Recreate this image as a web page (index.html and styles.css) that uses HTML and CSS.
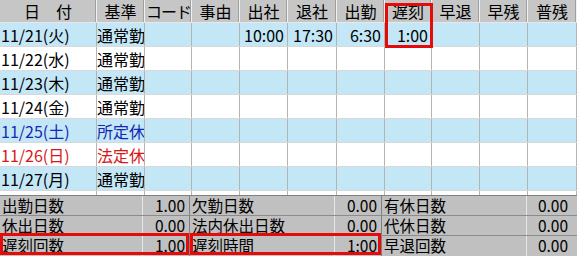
FILE: index.html
```html
<!DOCTYPE html>
<html lang="ja">
<head>
<meta charset="utf-8">
<link rel="stylesheet" href="styles.css">
</head>
<body>
<div class="sheet">
  <div class="grid">
    <div class="row head">
      <div class="c">日　付</div><div class="c">基準</div><div class="c code">コード</div><div class="c">事由</div><div class="c">出社</div><div class="c">退社</div><div class="c">出勤</div><div class="c">遅刻</div><div class="c">早退</div><div class="c">早残</div><div class="c">普残</div>
    </div>
    <div class="row blue">
      <div class="c date">11/21(火)</div><div class="c kind">通常勤</div><div class="c"></div><div class="c"></div><div class="c num">10:00</div><div class="c num">17:30</div><div class="c num">6:30</div><div class="c num">1:00</div><div class="c"></div><div class="c"></div><div class="c"></div>
    </div>
    <div class="row white">
      <div class="c date">11/22(水)</div><div class="c kind">通常勤</div><div class="c"></div><div class="c"></div><div class="c"></div><div class="c"></div><div class="c"></div><div class="c"></div><div class="c"></div><div class="c"></div><div class="c"></div>
    </div>
    <div class="row blue">
      <div class="c date">11/23(木)</div><div class="c kind">通常勤</div><div class="c"></div><div class="c"></div><div class="c"></div><div class="c"></div><div class="c"></div><div class="c"></div><div class="c"></div><div class="c"></div><div class="c"></div>
    </div>
    <div class="row white">
      <div class="c date">11/24(金)</div><div class="c kind">通常勤</div><div class="c"></div><div class="c"></div><div class="c"></div><div class="c"></div><div class="c"></div><div class="c"></div><div class="c"></div><div class="c"></div><div class="c"></div>
    </div>
    <div class="row blue sat">
      <div class="c date">11/25(土)</div><div class="c kind">所定休</div><div class="c"></div><div class="c"></div><div class="c"></div><div class="c"></div><div class="c"></div><div class="c"></div><div class="c"></div><div class="c"></div><div class="c"></div>
    </div>
    <div class="row white sun">
      <div class="c date">11/26(日)</div><div class="c kind">法定休</div><div class="c"></div><div class="c"></div><div class="c"></div><div class="c"></div><div class="c"></div><div class="c"></div><div class="c"></div><div class="c"></div><div class="c"></div>
    </div>
    <div class="row blue">
      <div class="c date">11/27(月)</div><div class="c kind">通常勤</div><div class="c"></div><div class="c"></div><div class="c"></div><div class="c"></div><div class="c"></div><div class="c"></div><div class="c"></div><div class="c"></div><div class="c"></div>
    </div>
    <div class="row white">
      <div class="c"></div><div class="c"></div><div class="c"></div><div class="c"></div><div class="c"></div><div class="c"></div><div class="c"></div><div class="c"></div><div class="c"></div><div class="c"></div><div class="c"></div>
    </div>
  </div>
  <div class="summary">
    <div class="srow">
      <div class="lab">出勤日数</div><div class="val">1.00</div><div class="lab">欠勤日数</div><div class="val">0.00</div><div class="lab">有休日数</div><div class="val last">0.00</div>
    </div>
    <div class="srow">
      <div class="lab">休出日数</div><div class="val">0.00</div><div class="lab">法内休出日数</div><div class="val">0.00</div><div class="lab">代休日数</div><div class="val last">0.00</div>
    </div>
    <div class="srow">
      <div class="lab">遅刻回数</div><div class="val">1.00</div><div class="lab">遅刻時間</div><div class="val">1:00</div><div class="lab">早退回数</div><div class="val last">0.00</div>
    </div>
  </div>
  <div class="mark mark-late"></div>
  <div class="mark mark-count"></div>
  <div class="mark mark-time"></div>
</div>
</body>
</html>
```
FILE: styles.css
```css
html, body {
  margin: 0;
  padding: 0;
  background: #ffffff;
}
.sheet {
  position: relative;
  width: 577px;
  height: 256px;
  overflow: hidden;
  font-family: "Noto Sans CJK JP", "Noto Sans", sans-serif;
  font-size: 16px;
  color: #000;
}
.grid {
  height: 195px;
  overflow: hidden;
}
.row {
  display: grid;
  grid-template-columns: 97px 48px 47px 48px 48px 49px 48px 47px 48px 48px 49px;
  height: 24px;
  box-sizing: border-box;
  border-bottom: 1px solid #d8d8d8;
}
.row .c {
  box-sizing: border-box;
  border-right: 1px solid #b4b4b4;
  line-height: 24px;
  white-space: nowrap;
  overflow: hidden;
}
.head {
  height: 23px;
  background: #c6c6c6;
  border-bottom: 1px solid #e8e8e8;
}
.head .c {
  text-align: center;
  line-height: 22px;
  border-right: 1px solid #f0f0f0;
  box-shadow: inset -1px 0 0 #a0a0a0;
}
.head .code {
  text-align: left;
  padding-left: 1px;
  letter-spacing: -1px;
}
.blue { background: #c3e7f7; }
.white { background: #ffffff; }
.date { padding-left: 1px; }
.kind { padding-left: 0; }
.num { text-align: right; padding-right: 3px; }
.sat .date, .sat .kind { color: #1428b4; }
.sun .date, .sun .kind { color: #d81818; }

.summary {
  background: #c0c0c0;
  border-top: 1px solid #808080;
}
.srow {
  display: grid;
  grid-template-columns: 143px 47px 145px 47px 145px 50px;
  height: 20px;
  box-sizing: border-box;
  border-bottom: 1px solid #8c8c8c;
  font-size: 15.5px;
}
.srow:last-child { border-bottom: none; }
.lab {
  padding-left: 2px;
  line-height: 19px;
  white-space: nowrap;
  border-right: 1px solid #e8e8e8;
}
.val {
  text-align: right;
  padding-right: 4px;
  line-height: 19px;
  border-right: 1px solid #808080;
}
.val.last { padding-right: 9px; border-right: none; }

.mark {
  position: absolute;
  box-sizing: border-box;
  border: 3px solid #e50b0b;
}
.mark-late { left: 385px; top: 3px; width: 48px; height: 45px; }
.mark-count { left: 0; top: 233px; width: 189px; height: 22px; }
.mark-time { left: 190px; top: 233px; width: 191px; height: 22px; }
```
